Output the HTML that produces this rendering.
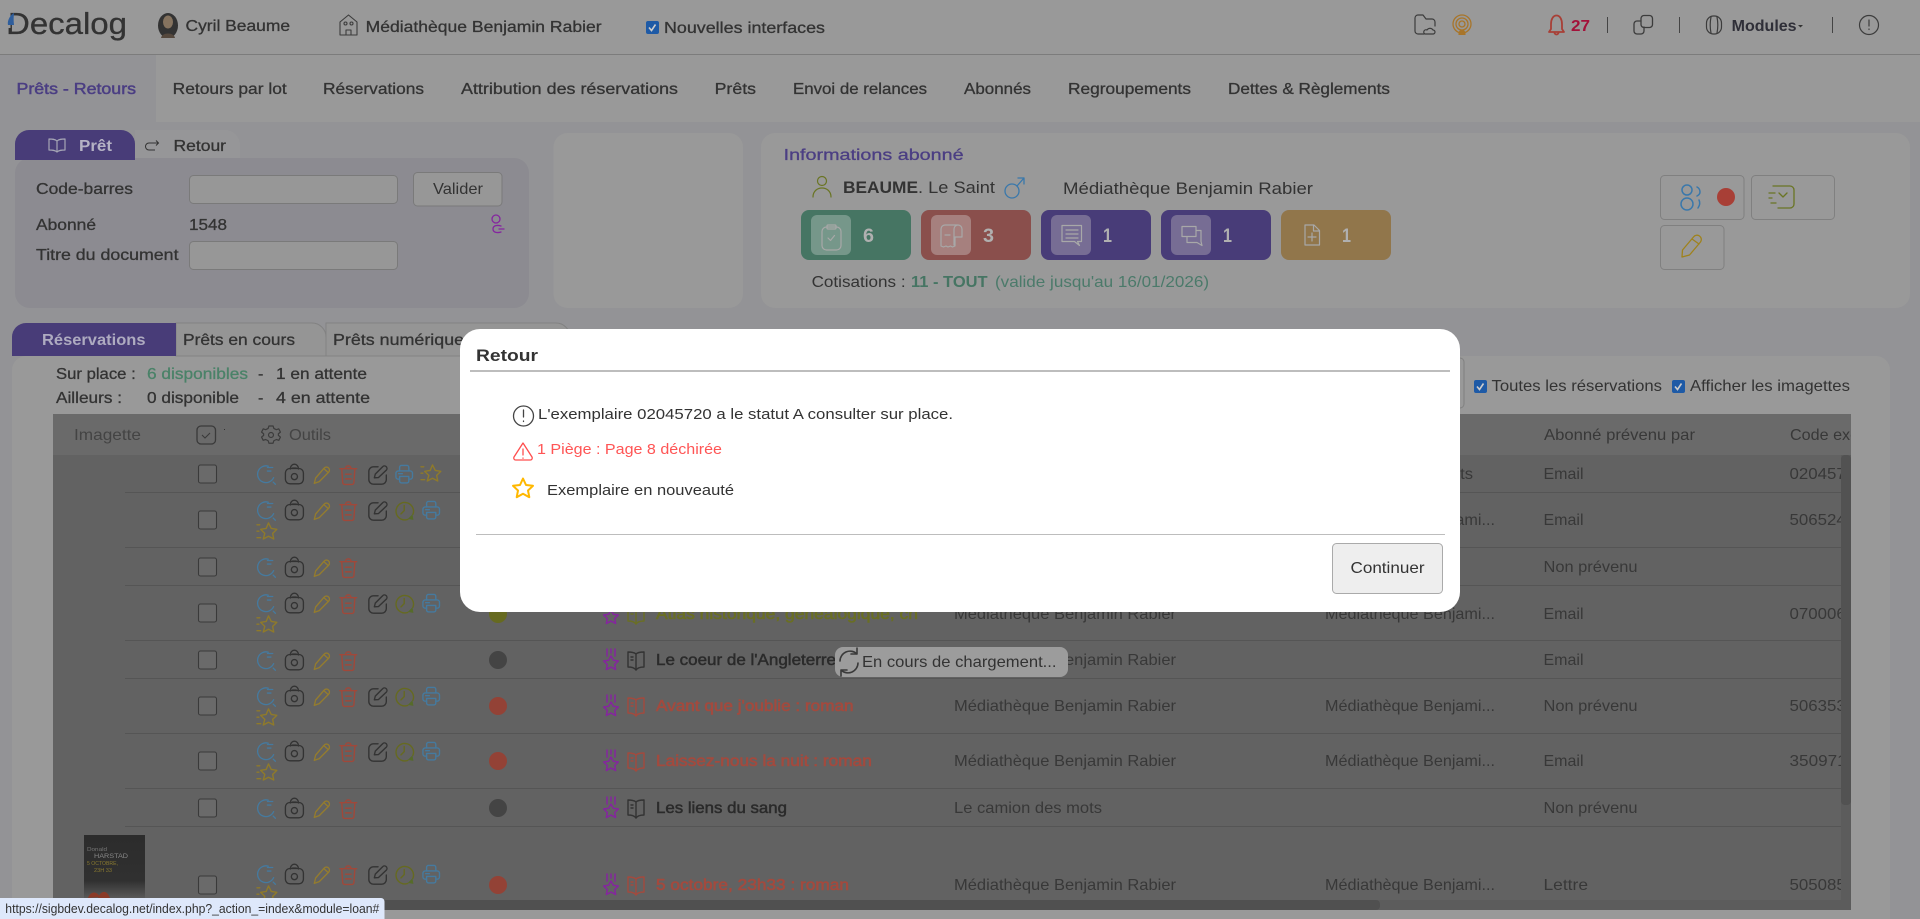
<!DOCTYPE html>
<html lang="fr">
<head>
<meta charset="utf-8">
<title>Decalog</title>
<style>
html,body{margin:0;padding:0;width:1920px;height:919px;overflow:hidden;background:#999}
svg{display:block}
text{font-family:"Liberation Sans","DejaVu Sans",sans-serif;font-size:16px;fill:#333}
.m{stroke:currentColor;stroke-width:.3;color:#333}
.s{fill:none;stroke:currentColor;stroke-width:1.5;stroke-linecap:round;stroke-linejoin:round}
.b{font-weight:bold}
.g{fill:#383838}
.tr{fill:#a34a3e;stroke:#a34a3e;stroke-width:.6}
.td{fill:#2b2b2b;stroke:#2b2b2b;stroke-width:.5}
.to{fill:#6a6f24;stroke:#6a6f24;stroke-width:.6}
.f15{font-size:15px}
</style>
</head>
<body>
<svg width="1920" height="919" viewBox="0 0 1920 919" xmlns="http://www.w3.org/2000/svg">
<defs>
<clipPath id="c1"><rect x="53" y="414" width="1788" height="486"/></clipPath>
<clipPath id="c2"><rect x="53" y="414" width="1798" height="41"/></clipPath>
<linearGradient id="cov" x1="0" y1="0" x2="0" y2="1"><stop offset="0" stop-color="#2c2c2c"/><stop offset=".65" stop-color="#303030"/><stop offset="1" stop-color="#6a6a6a"/></linearGradient>

<g id="i-search" class="s"><path d="M14 2.500A9.500 9.500 0 1 0 20 15.500"/><path d="M13 4h6M13 8h4"/><path d="M19.500 20.500l2.500 2.500"/></g>
<g id="i-lock" class="s"><rect x="1" y="5" width="20" height="17" rx="5"/><path d="M6.500 5.500c0-7 9-7 9 0"/><path d="M9 4.500h4"/><circle cx="11" cy="14" r="3.400"/></g>
<g id="i-pencil" class="s"><path d="M2 21l1.500-6L13 4a3.200 3.200 0 0 1 5 4.500L7.500 19z"/><path d="M12.500 4.500l5 4.500"/></g>
<g id="i-trash" class="s"><path d="M1 5h18M7 5c0-4 6-4 6 0"/><path d="M3 6l1 14a2 2 0 0 0 2 2h8a2 2 0 0 0 2-2l1-14"/><path d="M7 11h6M7 16h6"/></g>
<g id="i-edit" class="s"><path d="M12 3H7a5 5 0 0 0-5 5v9a5 5 0 0 0 5 5h9a5 5 0 0 0 5-5v-5"/><path d="M8 15l1-4 8-8a2.600 2.600 0 0 1 4 3.700l-8.500 8z"/></g>
<g id="i-clock"><g class="s"><path d="M19.500 15A9.500 9.500 0 1 0 14 20.500"/><path d="M10 5.500V11l-3.500 3.500"/></g><path d="M14 20l5-5 1 6z" fill="#566b2a"/></g>
<g id="i-print" class="s"><path d="M5 7V3a2 2 0 0 1 2-2h6a2 2 0 0 1 2 2v4"/><path d="M5 16H3.500A2.500 2.500 0 0 1 1 13.500v-4A2.500 2.500 0 0 1 3.500 7h13A2.500 2.500 0 0 1 19 9.500v4a2.500 2.500 0 0 1-2.500 2.500H15"/><path d="M5 13h10v5a2 2 0 0 1-2 2H7a2 2 0 0 1-2-2z"/><path d="M4 10h4"/></g>
<g id="i-star" class="s"><path d="M12.500 1l3 6 6 1-4.500 4.300 1.200 6.200-5.700-3-5.700 3L8.500 12.300 4 8l6-1z"/><path d="M0 3h3M0 10h2M0 17h4"/></g>
<g id="i-medal"><g class="s"><path d="M4 0v7M8 0v4M12 0v7"/><path d="M8 7l2.300 4.200 5 .8-3.600 3.500.9 5-4.600-2.400-4.600 2.400.9-5L.7 12l5-.8z"/></g></g>
<g id="i-book" class="s" style="stroke-width:1.400"><path d="M9 3C7 1 3 1 1 1v15c2 0 6 0 8 3 2-3 6-3 8-3V1c-2 0-6 0-8 2z"/><path d="M9 3v16M4 6h2M4 9h2"/></g>

<g id="ta">
<use href="#i-search" transform="translate(256,-10) scale(.88)" style="color:#457a9f"/>
<use href="#i-lock" transform="translate(284.500,-10) scale(.9)" style="color:#333"/>
<use href="#i-pencil" transform="translate(312.500,-9.500) scale(.9)" style="color:#947c2e"/>
<use href="#i-trash" transform="translate(339,-10) scale(.93)" style="color:#a0483a"/>
</g>
<g id="te"><use href="#i-edit" transform="translate(367,-10) scale(.92)" style="color:#333"/></g>
<g id="tc"><use href="#i-clock" transform="translate(395,-9.500) scale(.92)" style="color:#666a20"/></g>
<g id="tp"><use href="#i-print" transform="translate(395,-9.500) scale(.92)" style="color:#457a9f"/></g>
<g id="tq"><use href="#i-print" transform="translate(422,-9.500) scale(.92)" style="color:#457a9f"/></g>
<g id="tb"><use href="#ta"/><use href="#te"/><use href="#tc"/><use href="#tq"/></g>
<g id="tstar"><use href="#i-star" transform="translate(257,-10) scale(.92)" style="color:#8f7a2a"/></g>
<g id="cb"><rect x="198.500" y="-9" width="18" height="18" rx="2" fill="#6a6a6a" stroke="#3a3a3a" stroke-width="1.100"/></g>
<g id="ttl"><use href="#i-medal" transform="translate(603,-11)" style="color:#85259f"/></g>
</defs>

<!-- page background -->
<rect width="1920" height="919" fill="#939396"/>
<rect width="1920" height="122" fill="#999"/>
<rect y="54" width="1920" height="1" fill="#7c7c7c"/>
<rect y="55" width="156" height="67" fill="#939396"/>

<!-- header -->
<text x="6" y="34" textLength="121" lengthAdjust="spacingAndGlyphs" class="m" style="font-size:31px">Decalog</text>
<rect x="6" y="8" width="4.500" height="20" fill="#999"/>
<path d="M8 25c-1-4 2-10 6-12-.5 4-.5 8 0 12z" fill="#2f5e9c"/>
<ellipse cx="168" cy="25.500" rx="10" ry="12.500" fill="#333"/><ellipse cx="168" cy="22" rx="5" ry="6.500" fill="#85735f"/><path d="M161 38c1-6 13-6 14 0z" fill="#55483d"/>
<text x="185.500" y="31" textLength="104.500" lengthAdjust="spacingAndGlyphs" class="m">Cyril Beaume</text>
<g class="s" style="color:#3c3c3c;stroke-width:1.100"><path d="M340 35V22l8.500-7 8.500 7v13z"/><rect x="344" y="22" width="3" height="3" rx="1.500"/><rect x="350" y="22" width="3" height="3" rx="1.500"/><path d="M346 35v-5h5v5"/></g>
<text x="365.600" y="32" textLength="236" lengthAdjust="spacingAndGlyphs" class="m">Médiathèque Benjamin Rabier</text>
<rect x="646" y="21" width="13" height="13" rx="2" fill="#1e5aa6"/><path d="M649 27.500l2.500 3 4-6" fill="none" stroke="#ccc" stroke-width="1.600"/>
<text x="664" y="33" textLength="161" lengthAdjust="spacingAndGlyphs" class="m">Nouvelles interfaces</text>

<g class="s" style="color:#3c3c3c;stroke-width:1.200"><path d="M1424 34h-6a3 3 0 0 1-3-3V18a3 3 0 0 1 3-3h5l3 4h6a3 3 0 0 1 3 3v4"/><path d="M1425 34h8a1.800 1.800 0 0 0 0-4 3.500 3.500 0 0 0-6 0 1.800 1.800 0 0 0-2 4z"/></g>
<g class="s" style="color:#a8752a;stroke-width:1.300"><circle cx="1462" cy="24" r="9"/><circle cx="1462" cy="24" r="6"/><circle cx="1462" cy="24" r="3"/></g><path d="M1458.500 35c-1-7 8-7 7 0z" fill="#a8752a"/>
<g class="s" style="color:#a83f36;stroke-width:1.800"><path d="M1556.500 15.500c-3.500 0-5.500 4-5.500 8.500v5l-2 3h15l-2-3v-5c0-4.500-2-8.500-5.500-8.500z"/><path d="M1554.500 33c1 2 3 2 4 0"/></g>
<text x="1571" y="31" textLength="19" lengthAdjust="spacingAndGlyphs" class="b" style="fill:#a3123a">27</text>
<rect x="1607" y="17" width="1" height="16" fill="#444"/><rect x="1679" y="17" width="1" height="16" fill="#444"/><rect x="1832" y="17" width="1" height="16" fill="#444"/>
<g class="s" style="color:#3c3c3c;stroke-width:1.300"><rect x="1641" y="15.500" width="11.500" height="12" rx="3"/><path d="M1641 21h-4a3 3 0 0 0-3 3v7a3 3 0 0 0 3 3h4a3 3 0 0 0 3-3v-4"/></g>
<g class="s" style="color:#3c3c3c;stroke-width:1.200"><rect x="1706.500" y="16" width="15" height="18" rx="7"/><path d="M1711 17c-1 5-1 11 0 16M1717 17c1 5 1 11 0 16"/></g>
<text x="1731.600" y="31" textLength="65" lengthAdjust="spacingAndGlyphs" class="b" style="fill:#2f2f38">Modules</text>
<path d="M1798 25h5l-2.500 2.500z" fill="#333"/>
<g class="s" style="color:#3c3c3c;stroke-width:1.200"><circle cx="1869" cy="25" r="9.500"/><path d="M1869 20v6M1869 29v.5"/></g>

<!-- nav -->
<g class="nav">
<text x="16.500" y="94" textLength="119.500" lengthAdjust="spacingAndGlyphs" style="fill:#4b3e83;stroke:#4b3e83;stroke-width:.5">Prêts - Retours</text>
<text x="172.700" y="94" textLength="114" lengthAdjust="spacingAndGlyphs" class="m">Retours par lot</text>
<text x="323" y="94" textLength="101" lengthAdjust="spacingAndGlyphs" class="m">Réservations</text>
<text x="461" y="94" textLength="217" lengthAdjust="spacingAndGlyphs" class="m">Attribution des réservations</text>
<text x="714.600" y="94" textLength="41.400" lengthAdjust="spacingAndGlyphs" class="m">Prêts</text>
<text x="793" y="94" textLength="134" lengthAdjust="spacingAndGlyphs" class="m">Envoi de relances</text>
<text x="964" y="94" textLength="67" lengthAdjust="spacingAndGlyphs" class="m">Abonnés</text>
<text x="1068" y="94" textLength="123" lengthAdjust="spacingAndGlyphs" class="m">Regroupements</text>
<text x="1228" y="94" textLength="162" lengthAdjust="spacingAndGlyphs" class="m">Dettes &amp; Règlements</text>
</g>

<!-- pret panel -->
<path d="M135 160v-30h90a15 15 0 0 1 15 15v15z" fill="#969698"/>
<rect x="15" y="158" width="514" height="150" rx="15" fill="#8c8b91"/>
<path d="M15 160v-16a14 14 0 0 1 14-14h92a14 14 0 0 1 14 14v16z" fill="#483c78"/>
<g class="s" style="color:#a5a5b5;stroke-width:1.200"><path d="M57 141c-2-2-5-2-8-2v11c3 0 6 0 8 2 2-2 5-2 8-2v-11c-3 0-6 0-8 2z"/><path d="M57 141v11"/></g>
<text x="79" y="151" textLength="33" lengthAdjust="spacingAndGlyphs" class="b" style="fill:#b5b2c4">Prêt</text>
<path d="M158 143h-9a3.500 3.500 0 0 0 0 7h6M156 140.500l2.500 2.500-2.500 2.500" fill="none" stroke="#333" stroke-width="1"/>
<text x="173.500" y="151" textLength="52.500" lengthAdjust="spacingAndGlyphs" class="m">Retour</text>
<text x="36" y="194" textLength="97" lengthAdjust="spacingAndGlyphs" class="m">Code-barres</text>
<rect x="189.500" y="175.500" width="208" height="28" rx="4" fill="#979797" stroke="#7a7a7a"/>
<rect x="413.500" y="172.500" width="88.500" height="33.500" rx="4" fill="#979797" stroke="#7a7a7a"/>
<text x="433" y="194" textLength="50" lengthAdjust="spacingAndGlyphs">Valider</text>
<text x="36" y="230" textLength="60" lengthAdjust="spacingAndGlyphs" class="m">Abonné</text>
<text x="189" y="230" textLength="38" lengthAdjust="spacingAndGlyphs" class="m">1548</text>
<g class="s" style="color:#85259f;stroke-width:1.300"><circle cx="496" cy="219" r="4"/><path d="M501 232c-3 1-8 1-8-3s5-4 8-3M499 229h5"/></g>
<text x="36" y="260" textLength="142.500" lengthAdjust="spacingAndGlyphs" class="m">Titre du document</text>
<rect x="189.500" y="241.500" width="208" height="28" rx="4" fill="#979797" stroke="#7a7a7a"/>

<rect x="553.500" y="133" width="189.500" height="175" rx="14" fill="#999"/>

<!-- info panel -->
<rect x="761" y="133" width="1149" height="175" rx="14" fill="#999"/>
<text x="783.600" y="160" textLength="180" lengthAdjust="spacingAndGlyphs" class="m" style="fill:#4b3e83;color:#4b3e83">Informations abonné</text>
<g class="s" style="color:#6a7524;stroke-width:1.200"><circle cx="822" cy="181" r="4.500"/><path d="M813 197c0-12 18-12 18 0"/></g>
<text x="843" y="193" textLength="75" lengthAdjust="spacingAndGlyphs" class="b" style="font-size:17px;fill:#333">BEAUME</text>
<text x="918" y="193" textLength="77" lengthAdjust="spacingAndGlyphs" style="font-size:17px">. Le Saint</text>
<g class="s" style="color:#3a78ab;stroke-width:1.300"><circle cx="1012" cy="191" r="7"/><path d="M1017 186l7-8M1018 178h6v6"/></g>
<text x="1063" y="194" textLength="250" lengthAdjust="spacingAndGlyphs" style="font-size:17px">Médiathèque Benjamin Rabier</text>

<rect x="801" y="210" width="110" height="50" rx="8" fill="#467563"/><rect x="811" y="215" width="40" height="40" rx="6" fill="#76978a"/>
<rect x="921" y="210" width="110" height="50" rx="8" fill="#8a4f4c"/><rect x="931" y="215" width="40" height="40" rx="6" fill="#a6807e"/>
<rect x="1041" y="210" width="110" height="50" rx="8" fill="#483c78"/><rect x="1051" y="215" width="40" height="40" rx="6" fill="#776d94"/>
<rect x="1161" y="210" width="110" height="50" rx="8" fill="#483c78"/><rect x="1171" y="215" width="40" height="40" rx="6" fill="#776d94"/>
<rect x="1281" y="210" width="110" height="50" rx="8" fill="#91764b"/>
<g class="s" style="color:#a8a8a8;stroke-width:1.200">
<rect x="822" y="227" width="19" height="23" rx="4.500"/><rect x="827" y="225" width="9" height="4" rx="1"/><path d="M828 238l2.500 2.500 4-5"/>
<path d="M941 246v-17a4 4 0 0 1 4-4h13a4 4 0 0 1 4 4v8h-7v9l-2.500 1-2-1-2.500 1-2-1-2.500 1zM958 225a4 4 0 0 0-4 4v16M945 235h5"/>
<path d="M1062 225.500h19.500v16h-4l2 4-5-4h-12.500zM1066 230h12M1066 234h12M1066 238h12"/>
<path d="M1182 226.500h14v10h-14zM1196 230.500h5v11l1 4-5-3h-10v-5"/>
<path d="M1305 225h9l5.500 5.500V245h-14.500zM1313.500 225v6h6M1312 233v8M1308 237h8"/>
</g>
<text x="863" y="242" textLength="11" lengthAdjust="spacingAndGlyphs" class="b" style="font-size:19px;fill:#b0b0b0">6</text>
<text x="983" y="242" textLength="11" lengthAdjust="spacingAndGlyphs" class="b" style="font-size:19px;fill:#b0b0b0">3</text>
<text x="1103" y="242" textLength="9" lengthAdjust="spacingAndGlyphs" class="b" style="font-size:19px;fill:#b0b0b0">1</text>
<text x="1223" y="242" textLength="9" lengthAdjust="spacingAndGlyphs" class="b" style="font-size:19px;fill:#b0b0b0">1</text>
<text x="1342" y="242" textLength="9" lengthAdjust="spacingAndGlyphs" class="b" style="font-size:19px;fill:#b0b0b0">1</text>
<text x="811.600" y="287" textLength="94" lengthAdjust="spacingAndGlyphs">Cotisations :</text>
<text x="911" y="287" textLength="76.600" lengthAdjust="spacingAndGlyphs" class="b" style="fill:#467563">11 - TOUT</text>
<text x="995" y="287" textLength="214" lengthAdjust="spacingAndGlyphs" style="fill:#4b7a6a">(valide jusqu'au 16/01/2026)</text>

<rect x="1660.500" y="175.500" width="83.500" height="44" rx="4" fill="#999" stroke="#808080"/>
<rect x="1751.500" y="175.500" width="83" height="44" rx="4" fill="#999" stroke="#808080"/>
<rect x="1660.500" y="225.500" width="63.500" height="44" rx="4" fill="#999" stroke="#808080"/>
<g class="s" style="color:#3a78ab;stroke-width:1.500"><circle cx="1687" cy="190" r="5"/><circle cx="1687" cy="204" r="6"/><path d="M1697 187c2 1 3 3 3 5s-1 3-3 4M1699 200c1 2 1 5-1 8"/></g>
<circle cx="1726" cy="197" r="9" fill="#a83f36"/>
<g class="s" style="color:#6a7524;stroke-width:1.300"><path d="M1773 186h17a4 4 0 0 1 4 4v14a4 4 0 0 1-4 4h-12M1769 193h6M1769 198h3M1771 203h5M1779 193l4 4 4-4"/></g>
<g class="s" style="color:#9f821c;stroke-width:1.300"><path d="M1682 257l.5-7 11-13a4 4 0 0 1 7 5l-11 13zM1692 239l7 5"/></g>

<!-- lower panel -->
<rect x="12" y="356" width="1878" height="600" rx="14" fill="#999"/>
<path d="M176 356v-33h136a14 14 0 0 1 14 14v19z" fill="#959595" stroke="#828282"/>
<path d="M326 356v-33h230a14 14 0 0 1 14 14v19z" fill="#959595" stroke="#828282"/>
<path d="M12 356v-19a14 14 0 0 1 14-14h150v33z" fill="#483c78"/>
<text x="42" y="345" textLength="103.500" lengthAdjust="spacingAndGlyphs" class="b" style="fill:#aeabc0">Réservations</text>
<text x="183" y="345" textLength="112" lengthAdjust="spacingAndGlyphs" class="m">Prêts en cours</text>
<text x="333" y="345" textLength="140" lengthAdjust="spacingAndGlyphs" class="m">Prêts numériques</text>

<text x="56" y="379" textLength="79.700" lengthAdjust="spacingAndGlyphs" class="m">Sur place :</text>
<text x="147" y="379" textLength="101" lengthAdjust="spacingAndGlyphs" class="m" style="fill:#4a8268;color:#4a8268">6 disponibles</text>
<text x="258" y="379" class="m">-</text>
<text x="276" y="379" textLength="91" lengthAdjust="spacingAndGlyphs" class="m">1 en attente</text>
<text x="56" y="403" textLength="66" lengthAdjust="spacingAndGlyphs" class="m">Ailleurs :</text>
<text x="147" y="403" textLength="92" lengthAdjust="spacingAndGlyphs" class="m">0 disponible</text>
<text x="258" y="403" class="m">-</text>
<text x="276" y="403" textLength="94" lengthAdjust="spacingAndGlyphs" class="m">4 en attente</text>

<rect x="1474" y="380" width="13" height="13" rx="2" fill="#1e5aa6"/><path d="M1477 386.500l2.500 3 4-6" fill="none" stroke="#ccc" stroke-width="1.600"/>
<text x="1491.500" y="391" textLength="170.500" lengthAdjust="spacingAndGlyphs">Toutes les réservations</text>
<rect x="1672" y="380" width="13" height="13" rx="2" fill="#1e5aa6"/><path d="M1675 386.500l2.500 3 4-6" fill="none" stroke="#ccc" stroke-width="1.600"/>
<text x="1690" y="391" textLength="160" lengthAdjust="spacingAndGlyphs">Afficher les imagettes</text>
<rect x="1440" y="358" width="24" height="50" rx="4" fill="#999" stroke="#808080"/>

<!-- table -->
<rect x="53" y="414" width="1798" height="41" fill="#6a6a6a"/>
<rect x="53" y="455" width="1798" height="445" fill="#626262"/>
<g fill="#555">
<rect x="125" y="492" width="1716" height="1"/><rect x="125" y="547" width="1716" height="1"/><rect x="125" y="585" width="1716" height="1"/><rect x="125" y="640" width="1716" height="1"/><rect x="125" y="678" width="1716" height="1"/><rect x="125" y="733" width="1716" height="1"/><rect x="125" y="788" width="1716" height="1"/><rect x="125" y="826" width="1716" height="1"/>
</g>
<text x="74" y="440" textLength="67" lengthAdjust="spacingAndGlyphs" style="fill:#444">Imagette</text>
<rect x="197" y="426" width="18.500" height="18" rx="4" fill="none" stroke="#3a3a3a" stroke-width="1.300"/><path d="M202 435l3 3 5-5" fill="none" stroke="#3a3a3a" stroke-width="1.100"/>
<rect x="224" y="429" width="1" height="1" fill="#333"/>
<g transform="translate(271,435) scale(.82) translate(-270.500,-437)"><g class="s" style="color:#3c3c3c;stroke-width:1.500"><path d="M268 426h5l1 3 3 1.500 3-1 2 4-2.500 2 0 2 2.500 2-2 4-3-1-3 1.500-1 3h-5l-1-3-3-1.500-3 1-2-4 2.500-2v-2l-2.500-2 2-4 3 1 3-1.500z"/><circle cx="270.500" cy="437" r="3"/></g></g>
<text x="289" y="440" textLength="42" lengthAdjust="spacingAndGlyphs" style="fill:#444">Outils</text>
<g clip-path="url(#c2)">
<text x="1544" y="440" textLength="151" lengthAdjust="spacingAndGlyphs" class="g">Abonné prévenu par</text>
<text x="1790" y="440" textLength="122" lengthAdjust="spacingAndGlyphs" class="g">Code exemplaire</text>
</g>

<!-- rows -->
<use href="#cb" y="474"/><use href="#cb" y="520"/><use href="#cb" y="567"/><use href="#cb" y="613"/><use href="#cb" y="660"/><use href="#cb" y="706"/><use href="#cb" y="761"/><use href="#cb" y="808"/><use href="#cb" y="885"/>

<use href="#ta" y="474"/><use href="#te" y="474"/><use href="#tp" y="474"/><use href="#i-star" transform="translate(421,464) scale(.92)" style="color:#8f7a2a"/>
<use href="#tb" y="510"/><use href="#tstar" y="532"/>
<use href="#ta" y="567"/>
<use href="#tb" y="603"/><use href="#tstar" y="625"/>
<use href="#ta" y="660"/>
<use href="#tb" y="696"/><use href="#tstar" y="718"/>
<use href="#tb" y="751"/><use href="#tstar" y="773"/>
<use href="#ta" y="808"/>
<use href="#tb" y="874"/><use href="#tstar" y="895"/>

<circle cx="498" cy="614" r="9" fill="#666a20"/>
<circle cx="498" cy="660" r="9" fill="#444"/>
<circle cx="498" cy="706" r="9" fill="#934236"/>
<circle cx="498" cy="761" r="9" fill="#934236"/>
<circle cx="498" cy="808" r="9" fill="#444"/>
<circle cx="498" cy="885" r="9" fill="#934236"/>

<use href="#ttl" y="614"/><use href="#i-book" transform="translate(627,605)" style="color:#6a6f24"/>
<use href="#ttl" y="660"/><use href="#i-book" transform="translate(627,651)" style="color:#333"/>
<use href="#ttl" y="706"/><use href="#i-book" transform="translate(627,697)" style="color:#a34a3e"/>
<use href="#ttl" y="761"/><use href="#i-book" transform="translate(627,752)" style="color:#a34a3e"/>
<use href="#ttl" y="808"/><use href="#i-book" transform="translate(627,799)" style="color:#333"/>
<use href="#ttl" y="885"/><use href="#i-book" transform="translate(627,876)" style="color:#a34a3e"/>

<text x="656" y="619" textLength="262" lengthAdjust="spacingAndGlyphs" class="to">Atlas historique, généalogique, ch</text>
<text x="656" y="665" textLength="180" lengthAdjust="spacingAndGlyphs" class="td">Le coeur de l'Angleterre</text>
<text x="656" y="711" textLength="197.600" lengthAdjust="spacingAndGlyphs" class="tr">Avant que j'oublie : roman</text>
<text x="656" y="766" textLength="215.800" lengthAdjust="spacingAndGlyphs" class="tr">Laissez-nous la nuit : roman</text>
<text x="656" y="813" textLength="131" lengthAdjust="spacingAndGlyphs" class="td">Les liens du sang</text>
<text x="656" y="890" textLength="193" lengthAdjust="spacingAndGlyphs" class="tr">5 octobre, 23h33 : roman</text>

<g class="g">
<text class="g" x="954" y="619" textLength="222" lengthAdjust="spacingAndGlyphs">Médiathèque Benjamin Rabier</text>
<text class="g" x="954" y="665" textLength="222" lengthAdjust="spacingAndGlyphs">Médiathèque Benjamin Rabier</text>
<text class="g" x="954" y="711" textLength="222" lengthAdjust="spacingAndGlyphs">Médiathèque Benjamin Rabier</text>
<text class="g" x="954" y="766" textLength="222" lengthAdjust="spacingAndGlyphs">Médiathèque Benjamin Rabier</text>
<text class="g" x="954" y="813" textLength="148" lengthAdjust="spacingAndGlyphs">Le camion des mots</text>
<text class="g" x="954" y="890" textLength="222" lengthAdjust="spacingAndGlyphs">Médiathèque Benjamin Rabier</text>

<text class="g" x="1325" y="479" textLength="148" lengthAdjust="spacingAndGlyphs">Le camion des mots</text>
<text class="g" x="1325" y="525" textLength="170" lengthAdjust="spacingAndGlyphs">Médiathèque Benjami...</text>
<text class="g" x="1325" y="619" textLength="170" lengthAdjust="spacingAndGlyphs">Médiathèque Benjami...</text>
<text class="g" x="1325" y="711" textLength="170" lengthAdjust="spacingAndGlyphs">Médiathèque Benjami...</text>
<text class="g" x="1325" y="766" textLength="170" lengthAdjust="spacingAndGlyphs">Médiathèque Benjami...</text>
<text class="g" x="1325" y="890" textLength="170" lengthAdjust="spacingAndGlyphs">Médiathèque Benjami...</text>

<text class="g" x="1543.500" y="479" textLength="40" lengthAdjust="spacingAndGlyphs">Email</text>
<text class="g" x="1543.500" y="525" textLength="40" lengthAdjust="spacingAndGlyphs">Email</text>
<text class="g" x="1543.500" y="572" textLength="94" lengthAdjust="spacingAndGlyphs">Non prévenu</text>
<text class="g" x="1543.500" y="619" textLength="40" lengthAdjust="spacingAndGlyphs">Email</text>
<text class="g" x="1543.500" y="665" textLength="40" lengthAdjust="spacingAndGlyphs">Email</text>
<text class="g" x="1543.500" y="711" textLength="94" lengthAdjust="spacingAndGlyphs">Non prévenu</text>
<text class="g" x="1543.500" y="766" textLength="40" lengthAdjust="spacingAndGlyphs">Email</text>
<text class="g" x="1543.500" y="813" textLength="94" lengthAdjust="spacingAndGlyphs">Non prévenu</text>
<text class="g" x="1543.500" y="890" textLength="44.500" lengthAdjust="spacingAndGlyphs">Lettre</text>
</g>
<g clip-path="url(#c1)">
<text class="g" x="1789.500" y="479" textLength="75" lengthAdjust="spacingAndGlyphs">02045720</text>
<text class="g" x="1789.500" y="525" textLength="75" lengthAdjust="spacingAndGlyphs">50652412</text>
<text class="g" x="1789.500" y="619" textLength="75" lengthAdjust="spacingAndGlyphs">07000612</text>
<text class="g" x="1789.500" y="711" textLength="75" lengthAdjust="spacingAndGlyphs">50635312</text>
<text class="g" x="1789.500" y="766" textLength="75" lengthAdjust="spacingAndGlyphs">35097112</text>
<text class="g" x="1789.500" y="890" textLength="75" lengthAdjust="spacingAndGlyphs">50508512</text>
</g>

<!-- cover -->
<rect x="84" y="835" width="61" height="70" fill="url(#cov)"/>
<text x="87" y="851" textLength="20" lengthAdjust="spacingAndGlyphs" style="font-size:5px;fill:#777">Donald</text>
<text x="94" y="858" textLength="34" lengthAdjust="spacingAndGlyphs" style="font-size:6px;fill:#888">HARSTAD</text>
<text x="87" y="865" textLength="31" lengthAdjust="spacingAndGlyphs" style="font-size:5px;fill:#8a7a30">5 OCTOBRE,</text>
<text x="94" y="872" textLength="18" lengthAdjust="spacingAndGlyphs" style="font-size:5px;fill:#8a7a30">23H 33</text>
<path d="M88 898c2-6 8-8 12-1zM98 898c2-6 8-10 12 0z" fill="#8a3a28"/>

<!-- scrollbars -->
<rect x="1841" y="455" width="10" height="445" fill="#5c5c5c"/>
<rect x="1841" y="455" width="10" height="350" rx="4" fill="#525252"/>
<rect x="53" y="900" width="1798" height="10" fill="#5c5c5c"/>
<rect x="53" y="900" width="1327" height="10" rx="4" fill="#505050"/>

<!-- loading chip -->
<rect x="835" y="647" width="233" height="30" rx="8" fill="#9c9c9c"/>
<g class="s" style="color:#3a3a3a;stroke-width:1.600"><path d="M840 661a10 10 0 0 1 17-7M858 663a10 10 0 0 1-17 7M857 648v6h-6M841 676v-6h6"/></g>
<text x="862" y="667" textLength="194.500" lengthAdjust="spacingAndGlyphs">En cours de chargement...</text>

<!-- modal -->
<rect x="460" y="329" width="1000" height="283" rx="20" fill="#fff"/>
<text x="476" y="361" textLength="62" lengthAdjust="spacingAndGlyphs" class="b" style="font-size:17px;fill:#333">Retour</text>
<rect x="470" y="370" width="980" height="2" fill="#bdbdbd"/>
<g class="s" style="color:#444;stroke-width:1.300"><circle cx="523.500" cy="416" r="10"/><path d="M523.500 410v7M523.500 421v.5"/></g>
<text x="538" y="419" textLength="415" lengthAdjust="spacingAndGlyphs" class="f15">L'exemplaire 02045720 a le statut A consulter sur place.</text>
<g class="s" style="color:#ff4d4d;stroke-width:1.300"><path d="M523 443l9 14a2 2 0 0 1-2 3h-14a2 2 0 0 1-2-3l9-14z"/><path d="M523 449v6M523 458v.3"/></g>
<text x="537" y="454" textLength="185" lengthAdjust="spacingAndGlyphs" class="f15" style="fill:#ff5555">1 Piège : Page 8 déchirée</text>
<path d="M523 478.500l3 6.500 7 .8-5 4.700 1.300 6.700-6.300-3.500-6.300 3.500 1.300-6.700-5-4.700 7-.8z" fill="none" stroke="#ffb800" stroke-width="2" stroke-linejoin="round"/>
<text x="547" y="495" textLength="187" lengthAdjust="spacingAndGlyphs" class="f15">Exemplaire en nouveauté</text>
<rect x="476" y="534" width="969" height="1" fill="#bdbdbd"/>
<rect x="1332.500" y="543.500" width="110" height="50" rx="4" fill="#eee" stroke="#aaa"/>
<text x="1350.500" y="573" textLength="74" lengthAdjust="spacingAndGlyphs">Continuer</text>

<!-- status tooltip -->
<path d="M0 898h381a3.500 3.500 0 0 1 3.500 3.500V919H0z" fill="#dee8fb"/>
<text x="5.300" y="913" textLength="374" lengthAdjust="spacingAndGlyphs" style="font-size:13px;fill:#333">https://sigbdev.decalog.net/index.php?_action_=index&amp;module=loan#</text>
</svg>
</body>
</html>
